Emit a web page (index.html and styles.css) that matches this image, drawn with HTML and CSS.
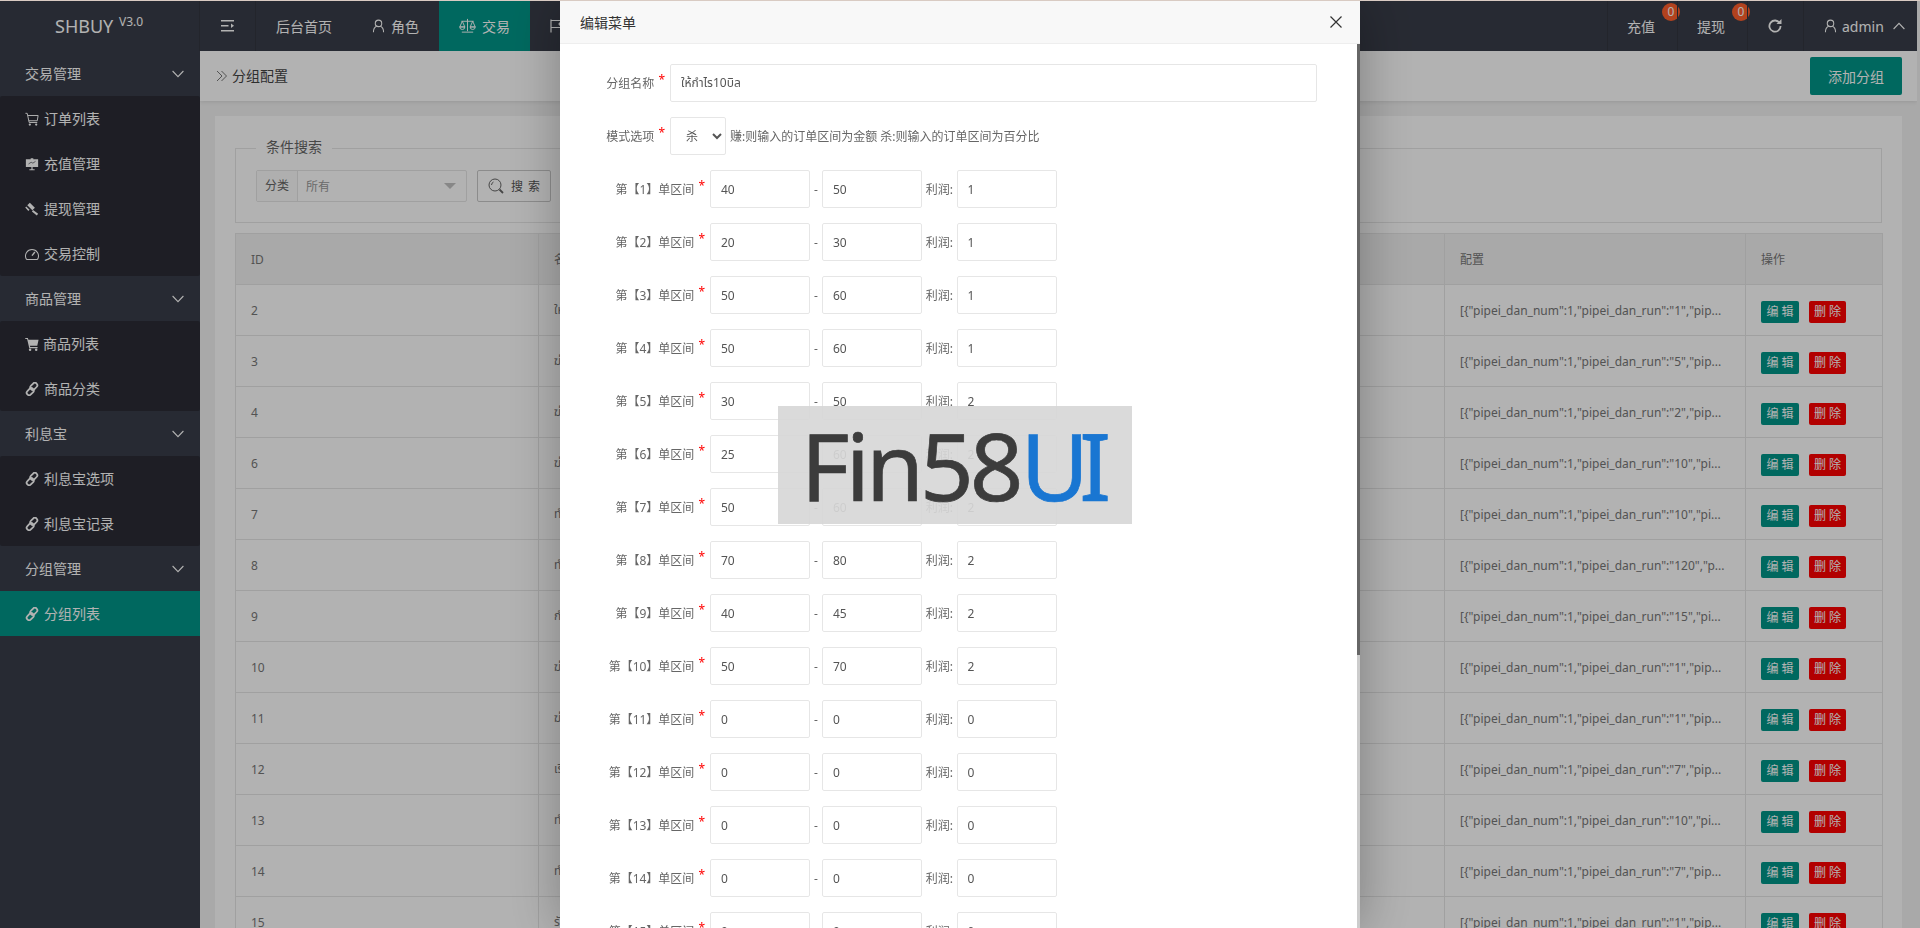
FILE: index.html
```html
<!DOCTYPE html>
<html lang="zh-CN">
<head>
<meta charset="utf-8">
<title>分组配置</title>
<link rel="stylesheet" href="styles.css">
</head>
<body>
<svg class="defs" width="0" height="0" aria-hidden="true">
  <symbol id="i-link" viewBox="0 0 16 16"><g fill="none" stroke="currentColor" stroke-width="2"><rect x="7.2" y="0.4" width="5.6" height="9" rx="2.8" transform="rotate(45 10 5)"/><rect x="3.2" y="6.6" width="5.6" height="9" rx="2.8" transform="rotate(45 6 11)"/></g></symbol>
  <symbol id="i-down" viewBox="0 0 12 8"><path d="M0.6 1 6 6.6 11.4 1" fill="none" stroke="currentColor" stroke-width="1.1"/></symbol>
  <symbol id="i-user" viewBox="0 0 14 16"><g fill="none" stroke="currentColor" stroke-width="1.2"><circle cx="7" cy="5" r="3.7"/><path d="M1.2 15c0-3.600 1.600-6 3.600-6.800M12.800 15c0-3.600-1.600-6-3.600-6.800"/></g></symbol>
</svg>

<div class="topline"></div>
<div class="app">
  <header class="topbar">
    <div class="logo">SHBUY <sup>V3.0</sup></div>
    <div class="tb-item tb-toggle">
      <svg class="ic-toggle" viewBox="0 0 14 12"><path d="M0 0h13v1.600H0zM0 5h7.500v1.600H0zM0 10h13v1.600H0z" fill="currentColor"/><path d="M10 3.600 13 5.800 10 8z" fill="currentColor"/></svg>
    </div>
    <nav class="tb-nav">
      <a class="tb-link">后台首页</a>
      <a class="tb-link"><svg class="ic-user"><use href="#i-user"/></svg>角色</a>
      <a class="tb-link active">
        <svg class="ic-scale" viewBox="0 0 18 16"><g fill="none" stroke="currentColor" stroke-width="1"><path d="M9 0.500v13M3 14.500h12M2.500 3h13M3.500 3 0.800 9h5.400zM14.500 3l-2.700 6h5.400z"/><path d="M0.800 9a2.700 2.700 0 0 0 5.400 0zM11.800 9a2.700 2.700 0 0 0 5.400 0z"/></g></svg>
        交易
      </a>
      <a class="tb-link tb-flag"><svg class="ic-flag" viewBox="0 0 14 14"><path d="M1 0.500v13M1 1.500h11l-3 3.500 3 3.500H1" fill="none" stroke="currentColor" stroke-width="1.200"/></svg>系统</a>
    </nav>
    <div class="tb-right">
      <a class="tb-r">充值<span class="badge">0</span></a>
      <a class="tb-r">提现<span class="badge">0</span></a>
      <a class="tb-r tb-refresh"><svg class="ic-refresh" viewBox="0 0 14 14"><path d="M11.800 4.200A5.600 5.600 0 1 0 12.600 7" fill="none" stroke="currentColor" stroke-width="1.800"/><path d="M8.500 5h5V0z" fill="currentColor"/></svg></a>
      <a class="tb-r tb-admin"><svg class="ic-user"><use href="#i-user"/></svg>admin<svg class="ic-up"><use href="#i-down"/></svg></a>
    </div>
  </header>

  <aside class="sidebar">
    <div class="sd-head">交易管理<svg class="ic-down"><use href="#i-down"/></svg></div>
    <div class="sd-group">
      <a class="sd-item"><svg class="sd-ic" viewBox="0 0 16 16"><g fill="none" stroke="currentColor" stroke-width="1.100"><path d="M0.500 1.500H2.500L4.800 12H14"/><path d="M3.200 4H15L14 10H4.300"/></g><circle cx="5.500" cy="14.300" r="1.300" fill="currentColor"/><circle cx="12.800" cy="14.300" r="1.300" fill="currentColor"/></svg>订单列表</a>
      <a class="sd-item"><svg class="sd-ic" viewBox="0 0 16 16"><path d="M6.500 1.500h3v1h5.500v9H1v-9h5.500zM7.300 11.500h1.400v2.500h2.300v1H5v-1h2.300z" fill="currentColor"/><path d="M4 8l3-2 2 1 3-2" stroke="#2b2c36" fill="none" stroke-width=".7"/></svg>充值管理</a>
      <a class="sd-item"><svg class="sd-ic" viewBox="0 0 16 16"><path d="M5.500 0.800 11.300 6.600 8.400 9.500 2.600 3.700zM1.400 5 5.200 8.800 3.800 10.200 0.300 6.400zM9.200 9.200l5.800 4.300-1.500 2-5.600-4.700z" fill="currentColor"/></svg>提现管理</a>
      <a class="sd-item"><svg class="sd-ic" viewBox="0 0 16 16"><path d="M2.400 14.300h11.200a1.300 1.300 0 0 0 1.100-.8A7.400 7.400 0 1 0 1.300 13.500a1.300 1.300 0 0 0 1.100.8z" fill="none" stroke="currentColor" stroke-width="1.200"/><path d="M8 9.800 11.300 5.700" stroke="currentColor" stroke-width="1.600"/></svg>交易控制</a>
    </div>
    <div class="sd-head">商品管理<svg class="ic-down"><use href="#i-down"/></svg></div>
    <div class="sd-group">
      <a class="sd-item sd-tight"><svg class="sd-ic" viewBox="0 0 16 16"><path d="M0.300 1h3l.6 2H15.500l-1.500 7H5.600l.4 1.500h8.400v1.300H4.900L2.400 2.300H0.300z" fill="currentColor"/><circle cx="5.800" cy="14.500" r="1.400" fill="currentColor"/><circle cx="12.800" cy="14.500" r="1.400" fill="currentColor"/></svg>商品列表</a>
      <a class="sd-item"><svg class="sd-ic"><use href="#i-link"/></svg>商品分类</a>
    </div>
    <div class="sd-head">利息宝<svg class="ic-down"><use href="#i-down"/></svg></div>
    <div class="sd-group">
      <a class="sd-item"><svg class="sd-ic"><use href="#i-link"/></svg>利息宝选项</a>
      <a class="sd-item"><svg class="sd-ic"><use href="#i-link"/></svg>利息宝记录</a>
    </div>
    <div class="sd-head">分组管理<svg class="ic-down"><use href="#i-down"/></svg></div>
    <div class="sd-group">
      <a class="sd-item current"><svg class="sd-ic"><use href="#i-link"/></svg>分组列表</a>
    </div>
  </aside>

  <main class="main">
    <div class="crumb">
      <div class="crumb-title"><svg class="ic-crumb" viewBox="0 0 12 12"><path d="M1 1l5 5-5 5M5.500 1l5 5-5 5" fill="none" stroke="currentColor" stroke-width="1"/></svg>分组配置</div>
      <button class="btn-add">添加分组</button>
    </div>
    <div class="content">
      <section class="card">
        <fieldset class="search">
          <legend>条件搜索</legend>
          <div class="search-row">
            <div class="pick">
              <span class="pick-label">分类</span>
              <span class="pick-value">所有</span>
              <i class="pick-arrow"></i>
            </div>
            <button class="btn-search"><svg class="ic-search" viewBox="0 0 16 16"><g fill="none" stroke="currentColor"><circle cx="7" cy="7" r="6"/><path d="M3.500 7a3.500 3.500 0 0 1 2-3"/><path d="M11.500 11.500 15 15" stroke-width="1.800"/></g></svg>搜 索</button>
          </div>
        </fieldset>
        <table class="grid">
          <colgroup><col class="c-id"><col class="c-name"><col class="c-conf"><col class="c-op"></colgroup>
          <thead><tr><th>ID</th><th>名称</th><th>配置</th><th>操作</th></tr></thead>
          <tbody>
            <tr><td>2</td><td>ให้กำไร10บิล</td><td>[{"pipei_dan_num":1,"pipei_dan_run":"1","pip...</td><td><a class="op op-edit">编 辑</a><a class="op op-del">删 除</a></td></tr>
            <tr><td>3</td><td>ฆ่า</td><td>[{"pipei_dan_num":1,"pipei_dan_run":"5","pip...</td><td><a class="op op-edit">编 辑</a><a class="op op-del">删 除</a></td></tr>
            <tr><td>4</td><td>ฆ่า</td><td>[{"pipei_dan_num":1,"pipei_dan_run":"2","pip...</td><td><a class="op op-edit">编 辑</a><a class="op op-del">删 除</a></td></tr>
            <tr><td>6</td><td>ฆ่า</td><td>[{"pipei_dan_num":1,"pipei_dan_run":"10","pi...</td><td><a class="op op-edit">编 辑</a><a class="op op-del">删 除</a></td></tr>
            <tr><td>7</td><td>ทำกำไร</td><td>[{"pipei_dan_num":1,"pipei_dan_run":"10","pi...</td><td><a class="op op-edit">编 辑</a><a class="op op-del">删 除</a></td></tr>
            <tr><td>8</td><td>ทำกำไร</td><td>[{"pipei_dan_num":1,"pipei_dan_run":"120","p...</td><td><a class="op op-edit">编 辑</a><a class="op op-del">删 除</a></td></tr>
            <tr><td>9</td><td>กำไร</td><td>[{"pipei_dan_num":1,"pipei_dan_run":"15","pi...</td><td><a class="op op-edit">编 辑</a><a class="op op-del">删 除</a></td></tr>
            <tr><td>10</td><td>ฆ่า</td><td>[{"pipei_dan_num":1,"pipei_dan_run":"1","pip...</td><td><a class="op op-edit">编 辑</a><a class="op op-del">删 除</a></td></tr>
            <tr><td>11</td><td>ฆ่า</td><td>[{"pipei_dan_num":1,"pipei_dan_run":"1","pip...</td><td><a class="op op-edit">编 辑</a><a class="op op-del">删 除</a></td></tr>
            <tr><td>12</td><td>เริ่ม</td><td>[{"pipei_dan_num":1,"pipei_dan_run":"7","pip...</td><td><a class="op op-edit">编 辑</a><a class="op op-del">删 除</a></td></tr>
            <tr><td>13</td><td>ทำ</td><td>[{"pipei_dan_num":1,"pipei_dan_run":"10","pi...</td><td><a class="op op-edit">编 辑</a><a class="op op-del">删 除</a></td></tr>
            <tr><td>14</td><td>ทำ</td><td>[{"pipei_dan_num":1,"pipei_dan_run":"7","pip...</td><td><a class="op op-edit">编 辑</a><a class="op op-del">删 除</a></td></tr>
            <tr><td>15</td><td>รับ</td><td>[{"pipei_dan_num":1,"pipei_dan_run":"1","pip...</td><td><a class="op op-edit">编 辑</a><a class="op op-del">删 除</a></td></tr>
          </tbody>
        </table>
      </section>
    </div>
  </main>
</div>

<div class="shade"></div>

<div class="modal">
  <div class="modal-head">
    <span>编辑菜单</span>
    <svg class="ic-close" viewBox="0 0 12 12"><path d="M0.500 0.500l11 11M11.500 0.500l-11 11" fill="none" stroke="currentColor" stroke-width="1.200"/></svg>
  </div>
  <div class="modal-body">
    <div class="row">
      <label class="lab lab-s">分组名称<b>*</b></label>
      <input class="inp inp-wide" value="ให้กำไร10บิล">
    </div>
    <div class="row">
      <label class="lab lab-s">模式选项<b>*</b></label>
      <select class="sel"><option>杀</option><option>赚</option></select>
      <span class="hint">赚:则输入的订单区间为金额 杀:则输入的订单区间为百分比</span>
    </div>
    <div class="row"><label class="lab">第【1】单区间<b>*</b></label><input class="inp" value="40"><span class="dash">-</span><input class="inp" value="50"><span class="rate">利润:</span><input class="inp" value="1"></div>
    <div class="row"><label class="lab">第【2】单区间<b>*</b></label><input class="inp" value="20"><span class="dash">-</span><input class="inp" value="30"><span class="rate">利润:</span><input class="inp" value="1"></div>
    <div class="row"><label class="lab">第【3】单区间<b>*</b></label><input class="inp" value="50"><span class="dash">-</span><input class="inp" value="60"><span class="rate">利润:</span><input class="inp" value="1"></div>
    <div class="row"><label class="lab">第【4】单区间<b>*</b></label><input class="inp" value="50"><span class="dash">-</span><input class="inp" value="60"><span class="rate">利润:</span><input class="inp" value="1"></div>
    <div class="row"><label class="lab">第【5】单区间<b>*</b></label><input class="inp" value="30"><span class="dash">-</span><input class="inp" value="50"><span class="rate">利润:</span><input class="inp" value="2"></div>
    <div class="row"><label class="lab">第【6】单区间<b>*</b></label><input class="inp" value="25"><span class="dash">-</span><input class="inp" value="60"><span class="rate">利润:</span><input class="inp" value="2"></div>
    <div class="row"><label class="lab">第【7】单区间<b>*</b></label><input class="inp" value="50"><span class="dash">-</span><input class="inp" value="60"><span class="rate">利润:</span><input class="inp" value="2"></div>
    <div class="row"><label class="lab">第【8】单区间<b>*</b></label><input class="inp" value="70"><span class="dash">-</span><input class="inp" value="80"><span class="rate">利润:</span><input class="inp" value="2"></div>
    <div class="row"><label class="lab">第【9】单区间<b>*</b></label><input class="inp" value="40"><span class="dash">-</span><input class="inp" value="45"><span class="rate">利润:</span><input class="inp" value="2"></div>
    <div class="row"><label class="lab">第【10】单区间<b>*</b></label><input class="inp" value="50"><span class="dash">-</span><input class="inp" value="70"><span class="rate">利润:</span><input class="inp" value="2"></div>
    <div class="row"><label class="lab">第【11】单区间<b>*</b></label><input class="inp" value="0"><span class="dash">-</span><input class="inp" value="0"><span class="rate">利润:</span><input class="inp" value="0"></div>
    <div class="row"><label class="lab">第【12】单区间<b>*</b></label><input class="inp" value="0"><span class="dash">-</span><input class="inp" value="0"><span class="rate">利润:</span><input class="inp" value="0"></div>
    <div class="row"><label class="lab">第【13】单区间<b>*</b></label><input class="inp" value="0"><span class="dash">-</span><input class="inp" value="0"><span class="rate">利润:</span><input class="inp" value="0"></div>
    <div class="row"><label class="lab">第【14】单区间<b>*</b></label><input class="inp" value="0"><span class="dash">-</span><input class="inp" value="0"><span class="rate">利润:</span><input class="inp" value="0"></div>
    <div class="row"><label class="lab">第【15】单区间<b>*</b></label><input class="inp" value="0"><span class="dash">-</span><input class="inp" value="0"><span class="rate">利润:</span><input class="inp" value="0"></div>
  </div>
  <div class="scroll-track"><div class="scroll-thumb"></div></div>
</div>

<div class="watermark"><span class="wm-dark">Fin58</span><span class="wm-blue">UI</span></div>
</body>
</html>
```
FILE: styles.css
```css
* { box-sizing: border-box; }
html, body { margin: 0; height: 100%; overflow: hidden; }
body {
  background: #f2f2f2;
  font-family: "Noto Sans", "Noto Sans CJK SC", "Noto Sans Thai", "DejaVu Sans", sans-serif;
  font-size: 14px;
  color: #666;
}
.defs { position: absolute; }
.topline { height: 1px; background: #d9cbc3; position: relative; z-index: 20; }

.app {
  width: 1917px;
  height: 927px;
  display: grid;
  grid-template-columns: 200px 1fr;
  grid-template-rows: 50px 1fr;
}

/* top bar */
.topbar {
  grid-column: 1 / 3;
  display: flex;
  background: #393d49;
  color: #fff;
}
.logo {
  width: 200px;
  padding-left: 55px;
  line-height: 50px;
  font-size: 18px;
  border-right: 1px solid #33363f;
  white-space: nowrap;
}
.logo sup { font-size: 12px; line-height: 0; vertical-align: 7px; margin-left: 1px; }
.tb-toggle {
  width: 56px;
  display: flex;
  align-items: center;
  justify-content: center;
  border-right: 1px solid #33363f;
}
.ic-toggle { width: 14px; height: 12px; }
.tb-nav { display: flex; flex: 1; }
.tb-link {
  display: flex;
  align-items: center;
  padding: 0 20px;
  white-space: nowrap;
}
.tb-link.active { background: #009688; }
.ic-user { width: 13px; height: 14px; margin-right: 6px; }
.ic-scale { width: 17px; height: 16px; margin-right: 6px; }
.ic-flag { width: 14px; height: 14px; margin-right: 6px; }
.tb-right { display: flex; }
.tb-r {
  position: relative;
  display: flex;
  align-items: center;
  padding: 0 19px;
  width: 70px;
  border-left: 1px solid #33363f;
  white-space: nowrap;
}
.tb-refresh { width: 56px; justify-content: center; padding: 0 2px 0 0; }
.tb-admin { width: 114px; padding: 0 0 0 20px; }
.tb-admin .ic-user { margin-right: 5px; }
.ic-refresh { width: 14px; height: 14px; }
.ic-up { width: 12px; height: 8px; margin-left: 9px; transform: rotate(180deg); }
.badge {
  position: absolute;
  left: 54px;
  top: 2px;
  width: 18px;
  height: 18px;
  border-radius: 50%;
  background: #ff5f2c;
  font-size: 12px;
  line-height: 18px;
  text-align: center;
  color: #fff;
}

/* sidebar */
.sidebar { background: #393d49; color: #fff; }
.sd-head {
  height: 45px;
  display: flex;
  align-items: center;
  justify-content: space-between;
  padding: 0 15px 2px 25px;
}
.ic-down { width: 12px; height: 8px; margin: 2px 1px 0 0; }
.sd-group { background: #2b2c36; border-radius: 2px; }
.sd-item {
  height: 45px;
  display: flex;
  align-items: center;
  padding: 0 0 2px 25px;
}
.sd-ic { width: 14px; height: 14px; margin: 2px 5px 0 0; flex: none; }
.sd-tight .sd-ic { margin-right: 4px; }
.sd-item.current { background: #009688; }

/* main */
.main { background: #f2f2f2; overflow: hidden; display: flex; flex-direction: column; }
.crumb {
  height: 50px;
  flex: none;
  background: #fff;
  box-shadow: 0 1px 4px rgba(0, 0, 0, .1);
  display: flex;
  align-items: center;
  justify-content: space-between;
  padding: 0 15px 0 16px;
  position: relative;
}
.crumb-title { display: flex; align-items: center; color: #444; padding-bottom: 2px; }
.ic-crumb { width: 12px; height: 12px; margin: 2px 4px 0 0; color: #777; }
.btn-add {
  width: 92px;
  height: 38px;
  border: 0;
  border-radius: 2px;
  background: #009688;
  color: #fff;
  font: inherit;
}
.content { padding: 15px 15px 0 15px; }
.card { background: #fff; padding: 22px 20px 20px; }

.search {
  margin: 0;
  padding: 12px 20px 20px;
  border: 1px solid #e6e6e6;
  min-width: 0;
}
.search legend { padding: 0 10px 2px; line-height: 18px; color: #666; }
.search-row { display: flex; gap: 10px; }
.pick {
  width: 211px;
  height: 32px;
  border: 1px solid #e6e6e6;
  border-radius: 2px;
  display: flex;
  align-items: center;
  position: relative;
  font-size: 12px;
}
.pick-label {
  width: 41px;
  line-height: 30px;
  text-align: center;
  border-right: 1px solid #e6e6e6;
  background: #fbfbfb;
  color: #666;
}
.pick-value { padding-left: 8px; color: #999; }
.pick-arrow {
  position: absolute;
  right: 10px;
  top: 12px;
  border: 6px solid transparent;
  border-top-color: #c2c2c2;
  border-bottom: 0;
}
.btn-search {
  width: 74px;
  height: 32px;
  display: flex;
  align-items: center;
  justify-content: center;
  background: #fff;
  border: 1px solid #c9c9c9;
  border-radius: 2px;
  color: #555;
  font: inherit;
  font-size: 12px;
  word-spacing: 2px;
  padding: 0;
}
.ic-search { width: 16px; height: 16px; margin-right: 7px; color: #666; }

.grid {
  width: 1647px;
  table-layout: fixed;
  border-collapse: collapse;
  margin-top: 10px;
  font-size: 12px;
  color: #777;
}
.c-id { width: 303px; }
.c-name { width: 906px; }
.c-conf { width: 301px; }
.c-op { width: 137px; }
.grid th, .grid td {
  border: 1px solid #e6e6e6;
  height: 51px;
  padding: 0 15px;
  font-weight: 400;
  text-align: left;
  white-space: nowrap;
  overflow: hidden;
}
.grid th { background: #f2f2f2; }
.op {
  display: inline-block;
  width: 38px;
  height: 22px;
  line-height: 22px;
  border-radius: 2px;
  text-align: center;
  color: #fff;
  position: relative;
  top: 2px;
}
.op-edit { background: #009688; margin-right: 10px; }
.op-del { background: #f00; width: 37px; }

/* overlay + dialog */
.shade { position: fixed; inset: 1px 0 0 0; background: rgba(0, 0, 0, .3); z-index: 5; }
.modal {
  position: fixed;
  left: 560px;
  top: 1px;
  width: 800px;
  height: 927px;
  background: #fff;
  box-shadow: 1px 1px 50px rgba(0, 0, 0, .3);
  z-index: 6;
  overflow: hidden;
  font-size: 12px;
}
.modal-head {
  height: 43px;
  background: #f8f8f8;
  border-bottom: 1px solid #eee;
  display: flex;
  align-items: center;
  justify-content: space-between;
  padding: 0 18px 0 20px;
  font-size: 14px;
  color: #333;
}
.ic-close { width: 12px; height: 12px; color: #333; }
.modal-body { padding: 20px 43px 0 40px; }
.row { display: flex; align-items: center; height: 38px; margin-bottom: 15px; }
.lab {
  width: 110px;
  flex: none;
  text-align: right;
  padding-right: 5px;
  color: #666;
  white-space: nowrap;
}
.lab-s { width: 70px; }
.lab b { color: #f00; font-weight: 400; margin-left: 4px; font-size: 12px; position: relative; top: -4px; }
.inp {
  width: 100px;
  height: 38px;
  flex: none;
  border: 1px solid #e6e6e6;
  border-radius: 2px;
  padding: 0 10px;
  font: inherit;
  color: #555;
  background: #fff;
  outline: 0;
}
.inp-wide { width: 647px; }
.sel {
  width: 56px;
  height: 38px;
  border: 1px solid #e6e6e6;
  border-radius: 2px;
  background: #fff;
  padding-left: 11px;
  font: inherit;
  color: #555;
}
.hint { margin-left: 4px; color: #666; }
.dash { width: 12px; text-align: center; }
.rate { width: 34.600px; text-align: center; white-space: nowrap; }
.scroll-track {
  position: absolute;
  right: 0;
  top: 43px;
  bottom: 0;
  width: 3px;
  background: #ccc;
}
.scroll-thumb { height: 611px; background: #666; }

.watermark {
  position: fixed;
  left: 778px;
  top: 406px;
  width: 354px;
  height: 118px;
  background: rgba(215, 215, 215, .92);
  z-index: 7;
  display: flex;
  align-items: center;
  justify-content: center;
  font-size: 94px;
  line-height: 1;
  color: #3c3c3c;
  -webkit-text-stroke: .7px currentColor;
}
.wm-dark { letter-spacing: -4px; }
.wm-blue { color: #1976d2; letter-spacing: -10px; margin: 0 8px 0 1px; }
```
